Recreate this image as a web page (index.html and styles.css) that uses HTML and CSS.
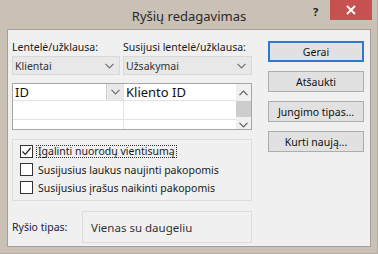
FILE: index.html
```html
<!DOCTYPE html>
<html lang="lt">
<head>
<meta charset="utf-8">
<link rel="stylesheet" href="styles.css">
</head>
<body>
<div class="window">
  <div class="titlebar">
    <div class="title">Ryšių redagavimas</div>
    <div class="help">?</div>
    <div class="close"><svg width="10" height="10" viewBox="0 0 10 10"><path d="M1 1L9 9M9 1L1 9" stroke="#fff" stroke-width="2"/></svg></div>
  </div>
  <div class="content">
    <div class="left">
      <div class="labels">
        <span class="lbl l1">Lentelė/užklausa:</span>
        <span class="lbl l2">Susijusi lentelė/užklausa:</span>
      </div>
      <div class="combos">
        <div class="combo c1"><span>Klientai</span><svg class="chev" width="9" height="6" viewBox="0 0 9 6"><path d="M0.5 0.8L4.5 4.8L8.5 0.8" fill="none" stroke="#707070" stroke-width="1.2"/></svg></div>
        <div class="combo c2"><span>Užsakymai</span><svg class="chev" width="9" height="6" viewBox="0 0 9 6"><path d="M0.5 0.8L4.5 4.8L8.5 0.8" fill="none" stroke="#707070" stroke-width="1.2"/></svg></div>
      </div>
      <div class="grid">
        <div class="cols">
          <div class="col colA">
            <div class="cell head"><span>ID</span><span class="ddbtn"><svg width="9" height="6" viewBox="0 0 9 6"><path d="M0.5 0.8L4.5 4.8L8.5 0.8" fill="none" stroke="#707070" stroke-width="1.2"/></svg></span></div>
            <div class="cell row"></div>
            <div class="cell row"></div>
          </div>
          <div class="col colB">
            <div class="cell head"><span>Kliento ID</span></div>
            <div class="cell row"></div>
            <div class="cell row"></div>
          </div>
        </div>
        <div class="scroll">
          <svg class="sarrow" width="9" height="6" viewBox="0 0 9 6"><path d="M0.5 5.2L4.5 1.2L8.5 5.2" fill="none" stroke="#606060" stroke-width="1.2"/></svg>
          <div class="thumb"></div>
          <svg class="sarrow down" width="9" height="6" viewBox="0 0 9 6"><path d="M0.5 0.8L4.5 4.8L8.5 0.8" fill="none" stroke="#606060" stroke-width="1.2"/></svg>
        </div>
      </div>
      <div class="group">
        <div class="chk"><span class="box"><svg width="11" height="11" viewBox="0 0 11 11"><path d="M1.5 5.5L4.3 8.3L9.6 2" fill="none" stroke="#222" stroke-width="1.2"/></svg></span><span class="focus">Įgalinti nuorodų vientisumą</span></div>
        <div class="chk"><span class="box"></span><span class="txt">Susijusius laukus naujinti pakopomis</span></div>
        <div class="chk"><span class="box"></span><span class="txt">Susijusius įrašus naikinti pakopomis</span></div>
      </div>
      <div class="type">
        <span class="tlabel">Ryšio tipas:</span>
        <div class="tbox">Vienas su daugeliu</div>
      </div>
    </div>
    <div class="buttons">
      <div class="btn default">Gerai</div>
      <div class="btn">Atšaukti</div>
      <div class="btn">Jungimo tipas...</div>
      <div class="btn">Kurti naują...</div>
    </div>
  </div>
</div>
</body>
</html>
```

FILE: styles.css
```css
* { box-sizing: border-box; }
html, body { margin: 0; padding: 0; }
body {
  width: 378px;
  height: 254px;
  overflow: hidden;
  font-family: "Noto Sans", sans-serif;
  font-size: 10.5px;
  color: #1a1a1a;
  background: #c7beb4;
}
.window {
  width: 378px;
  height: 254px;
  background: #c9c0b6;
  display: flex;
  flex-direction: column;
  padding: 0 6px 6px 7px;
  border-right: 1px solid #b5aca3;
  border-bottom: 1px solid #b5aca3;
}
.titlebar {
  height: 29px;
  position: relative;
  display: flex;
  justify-content: center;
  align-items: center;
  flex: none;
}
.title {
  font-size: 13px;
  color: #2b2b2b;
  padding-top: 2px;
}
.help {
  position: absolute;
  left: 306px;
  top: 4px;
  font-size: 11px;
  font-weight: bold;
  color: #222;
}
.close {
  position: absolute;
  left: 323px;
  top: 0;
  width: 42px;
  height: 20px;
  background: #c75050;
  display: flex;
  align-items: center;
  justify-content: center;
}
.content {
  flex: 1;
  background: #f0f0f0;
  border: 1px solid #a8a097;
  display: flex;
  padding: 0 0 0 4px;
}
.left {
  width: 240px;
  display: flex;
  flex-direction: column;
}
.labels {
  display: flex;
  margin-top: 9px;
  height: 16px;
  line-height: 16px;
}
.l1 { width: 111px; }
.combos {
  display: flex;
  gap: 3px;
  margin-top: 1px;
}
.combo {
  height: 19px;
  background: #e8e8e8;
  border: 1px solid #d9d9d9;
  display: flex;
  align-items: center;
  justify-content: space-between;
  padding: 0 5px 0 2px;
  color: #333;
}
.c1 { width: 108px; }
.c2 { width: 129px; }
.grid {
  margin-top: 8px;
  height: 47px;
  border: 1px solid #a6a6a6;
  background: #fff;
  display: flex;
  overflow: hidden;
}
.cols { display: flex; flex: 1; }
.col { display: flex; flex-direction: column; }
.colA { width: 111px; border-right: 1px solid #e2e2e2; }
.colB { flex: 1; }
.cell { border-bottom: 1px solid #e2e2e2; flex: none; }
.head {
  height: 17px;
  font-size: 13px;
  line-height: 16px;
  padding-left: 2px;
  display: flex;
  justify-content: space-between;
  color: #111;
}
.row { height: 19px; }
.ddbtn {
  width: 17px;
  height: 16px;
  background: #e9e9e9;
  border-left: 1px solid #d0d0d0;
  display: flex;
  align-items: center;
  justify-content: center;
}
.scroll {
  width: 15px;
  background: #f0f0f0;
  display: flex;
  flex-direction: column;
  align-items: center;
}
.sarrow { margin-top: 6px; flex: none; }
.sarrow.down { margin-top: 5px; }
.thumb {
  width: 15px;
  height: 16px;
  margin-top: 5px;
  background: #cdcdcd;
  flex: none;
}
.group {
  margin-top: 9px;
  height: 62px;
  border: 1px solid #dcdcdc;
  padding: 5px 0 0 7px;
  display: flex;
  flex-direction: column;
  gap: 5px;
}
.chk {
  display: flex;
  align-items: center;
  height: 13px;
}
.box {
  width: 13px;
  height: 13px;
  border: 1px solid #333;
  background: #fff;
  margin-right: 3px;
  display: flex;
  align-items: center;
  justify-content: center;
  flex: none;
}
.focus {
  border: 1px dotted #333;
  line-height: 11px;
  padding: 0 1px;
}
.txt { padding-left: 2px; }
.type {
  margin-top: 10px;
  display: flex;
  align-items: center;
}
.tlabel { width: 70px; color: #1a2040; }
.tbox {
  width: 170px;
  height: 32px;
  border: 1px solid #dcdcdc;
  display: flex;
  align-items: center;
  padding-left: 8px;
  font-size: 11.5px;
  color: #333;
}
.buttons {
  margin-left: 16px;
  width: 96px;
  padding-top: 11px;
  display: flex;
  flex-direction: column;
  gap: 9px;
}
.btn {
  height: 21px;
  background: #e1e1e1;
  border: 1px solid #adadad;
  display: flex;
  align-items: center;
  justify-content: center;
  color: #111;
}
.btn.default {
  border: 2px solid #2b7bd4;
}
```
